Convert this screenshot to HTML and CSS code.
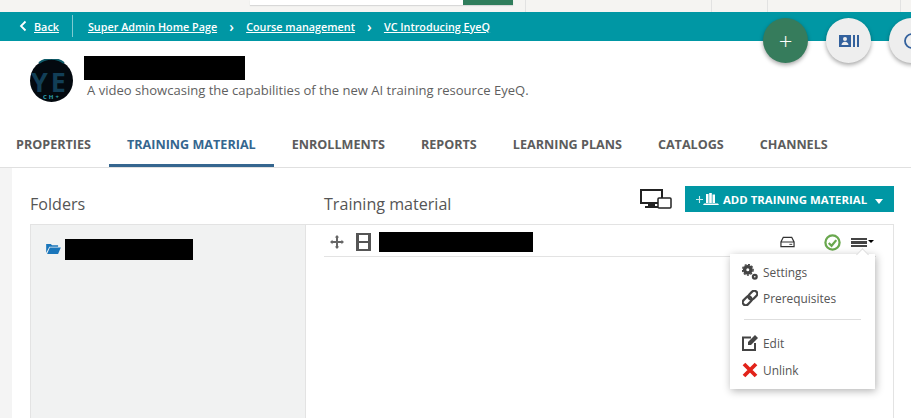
FILE: index.html
```html
<!DOCTYPE html>
<html lang="en">
<head>
    <meta charset="UTF-8">
    <title>VC Introducing EyeQ</title>
    <link rel="stylesheet" href="styles.css">
</head>
<body>
    <div class="top-strip">
        <div class="search-box"><span class="search-btn"></span></div>
        <span class="strip-cell cell-a"></span>
        <span class="strip-cell cell-b"></span>
        <span class="strip-cell cell-c"></span>
        <span class="strip-cell cell-d"></span>
    </div>

    <div class="breadcrumb">
        <svg class="back-arrow" viewBox="0 0 8 12" width="8" height="12">
            <path d="M6.500 1.500 2 6l4.500 4.500" fill="none" stroke="#fff" stroke-width="1.800"/>
        </svg>
        <a class="crumb back-link">Back</a>
        <span class="crumb-divider"></span>
        <a class="crumb">Super Admin Home Page</a>
        <span class="crumb-sep">&#8250;</span>
        <a class="crumb">Course management</a>
        <span class="crumb-sep">&#8250;</span>
        <a class="crumb">VC Introducing EyeQ</a>
    </div>

    <!-- Floating round buttons -->
    <div class="fab-row">
        <div class="fab fab-green">+</div>
        <div class="fab">
            <svg viewBox="0 0 20 12" width="20" height="12">
                <path fill="#33619d" fill-rule="evenodd" d="M0 0h12v12H0zM6 2a2 2 0 1 0 0 4 2 2 0 0 0 0-4zM2.500 10h7c0-2-1.500-3.300-3.500-3.300S2.500 8 2.500 10z"/>
                <path fill="#33619d" d="M14 0h2v12h-2zM18 0h2v12h-2z"/>
            </svg>
        </div>
        <div class="fab">
            <svg viewBox="0 0 16 16" width="16" height="16">
                <circle cx="8" cy="8" r="7" fill="none" stroke="#33619d" stroke-width="1.800"/>
                <path d="M8 7v5M8 3.500v2" stroke="#33619d" stroke-width="2"/>
            </svg>
        </div>
    </div>

    <div class="course-head">
        <svg class="course-logo" viewBox="0 0 43 43" width="43" height="43">
            <circle cx="21.500" cy="21.500" r="21.500" fill="#03090f"/>
            <path d="M9 4a21 21 0 0 1 25 0" fill="none" stroke="#0e5a68" stroke-width="2"/>
            <text class="logo-text"><tspan class="logo-big" x="1" y="33">YE</tspan><tspan class="logo-small" x="13" y="40">CH+</tspan></text>
        </svg>
        <div class="course-info">
            <div class="redact course-title"></div>
            <p class="course-desc">A video showcasing the capabilities of the new AI training resource EyeQ.</p>
        </div>
    </div>

    <nav class="tabs">
        <a class="tab">PROPERTIES</a>
        <a class="tab tab-active">TRAINING MATERIAL</a>
        <a class="tab">ENROLLMENTS</a>
        <a class="tab">REPORTS</a>
        <a class="tab">LEARNING PLANS</a>
        <a class="tab">CATALOGS</a>
        <a class="tab">CHANNELS</a>
    </nav>

    <main class="content">
        <div class="panel">
            <div class="panel-head">
                <h2 class="folders-title">Folders</h2>
                <h2 class="material-title">Training material</h2>
                <svg class="devices-icon" viewBox="0 0 32 20" width="32" height="20">
                    <path d="M1 1h21v13H1z" fill="none" stroke="#222" stroke-width="2"/>
                    <path d="M8 15h7v2h3v2H5v-2h3z" fill="#222"/>
                    <rect x="18" y="9" width="13" height="10" rx="1" fill="#fff" stroke="#222" stroke-width="1.500"/>
                </svg>
                <button class="add-btn">
                    <svg viewBox="0 0 24 12" width="24" height="12">
                        <path d="M0 6.500h7M3.500 3v7" stroke="#cfeeee" stroke-width="1.100"/>
                        <path d="M10 1h2.500v9H10zM13.200 0h2.600v10h-2.600zM16.500 1.500h2.500V10h-2.500z" fill="#fff"/>
                        <path d="M8 10.500h14l1 1.500H7z" fill="#fff"/>
                    </svg>
                    ADD TRAINING MATERIAL
                    <span class="add-caret"></span>
                </button>
            </div>

            <div class="columns">
                <aside class="folders">
                    <svg viewBox="0 0 16 12" width="15" height="11">
                        <path d="M0 11V1h5l1.500 1.500H13V4H3.500L0 11zM1 12l3-7h12l-3 7z" fill="#1a76bb"/>
                    </svg>
                    <div class="redact folder-name"></div>
                </aside>

                <section class="material">
                    <div class="material-row">
                        <svg viewBox="0 0 14 14" width="14" height="14">
                            <path d="M7 0l2.200 2.500H8V6h3.500V4.800L14 7l-2.500 2.200V8H8v3.500h1.200L7 14l-2.200-2.500H6V8H2.500v1.200L0 7l2.500-2.200V6H6V2.500H4.800z" fill="#666"/>
                        </svg>
                        <svg viewBox="0 0 15 18" width="15" height="18">
                            <path fill="#555" fill-rule="evenodd" d="M0 0h15v18H0zM3 2v6h9V2zM3 10v6h9v-6z"/>
                        </svg>
                        <div class="redact material-name"></div>
                        <svg class="drive-icon" viewBox="0 0 16 12" width="15" height="12">
                            <path d="M3.500 1h9L15 6v5H1V6zM1 6h14" fill="none" stroke="#333" stroke-width="1.300"/>
                            <path d="M10 8.500h3" stroke="#333"/>
                        </svg>
                        <svg class="check-icon" viewBox="0 0 18 18" width="17" height="17">
                            <circle cx="9" cy="9" r="7.500" fill="none" stroke="#6aa84f" stroke-width="2.400"/>
                            <path d="M5 9.500l3 3 5-6" fill="none" stroke="#6aa84f" stroke-width="2.400"/>
                        </svg>
                        <div class="menu-toggle">
                            <span class="bars"></span>
                            <span class="toggle-caret"></span>
                        </div>
                    </div>

                    <div class="dropdown">
                        <a class="menu-item">
                            <svg viewBox="0 0 16 16" width="16" height="16">
                                <circle cx="5.800" cy="5.800" r="3.200" fill="none" stroke="#444" stroke-width="3.400"/>
                                <circle cx="5.800" cy="5.800" r="5.300" fill="none" stroke="#444" stroke-width="1.400" stroke-dasharray="2 1.500"/>
                                <circle cx="12.800" cy="12.800" r="1.900" fill="none" stroke="#444" stroke-width="2.200"/>
                            </svg>
                            Settings
                        </a>
                        <a class="menu-item">
                            <svg viewBox="0 0 16 16" width="16" height="16">
                                <g transform="rotate(-45 8 8)" fill="none" stroke="#444" stroke-width="2.200">
                                    <rect x="-1" y="5" width="10" height="6" rx="3"/>
                                    <rect x="7" y="5" width="10" height="6" rx="3"/>
                                </g>
                            </svg>
                            Prerequisites
                        </a>
                        <hr class="menu-line">
                        <a class="menu-item">
                            <svg viewBox="0 0 16 16" width="16" height="16">
                                <path d="M9 2.500H1V15h12V8" fill="none" stroke="#444" stroke-width="2"/>
                                <path d="M13 0l3 3-7 7H6V7z" fill="#444"/>
                            </svg>
                            Edit
                        </a>
                        <a class="menu-item menu-item-last">
                            <svg viewBox="0 0 16 16" width="16" height="16">
                                <path d="M2 2l12 12M14 2L2 14" stroke="#e2231a" stroke-width="3.800"/>
                            </svg>
                            Unlink
                        </a>
                    </div>
                </section>
            </div>
        </div>
    </main>
</body>
</html>
```
FILE: styles.css
```css
* {
    box-sizing: border-box;
}

body {
    margin: 0;
    height: 418px;
    overflow: hidden;
    position: relative;
    background: #fff;
    color: #555;
    font-family: "Open Sans", sans-serif;
    font-size: 13px;
}

.redact {
    background: #000;
}

/* Top strip */
.top-strip {
    height: 12px;
    background: #f5f4f2;
    display: flex;
    padding-left: 250px;
}

.search-box {
    width: 263px;
    height: 5px;
    background: #fff;
    box-shadow: 0 1px 1px #d8d8d8;
    display: flex;
    justify-content: flex-end;
}

.search-btn {
    width: 50px;
    height: 5px;
    background: #2f7d5b;
}

.strip-cell {
    border-left: 1px solid #e2e2e2;
}

.cell-a {
    width: 186px;
    margin-left: 12px;
}

.cell-b {
    width: 56px;
}

.cell-c {
    width: 133px;
}

.cell-d {
    width: 11px;
}

/* Breadcrumb */
.breadcrumb {
    height: 29px;
    padding: 0 0 1px 19px;
    background: #0097a4;
    display: flex;
    align-items: center;
    color: #fff;
    font-size: 10.800px;
    font-weight: 600;
}

.back-arrow {
    margin-right: 7px;
}

.crumb {
    color: #fff;
    text-decoration: underline;
}

.crumb-divider {
    width: 1px;
    height: 22px;
    background: #7fcbd1;
    margin: 0 15px 0 13px;
}

.crumb-sep {
    width: 29px;
    text-align: center;
    font-size: 14px;
}

/* Floating buttons */
.fab-row {
    position: absolute;
    top: 18px;
    left: 763px;
    display: flex;
    gap: 18px;
}

.fab {
    width: 45px;
    height: 45px;
    flex: none;
    border-radius: 50%;
    background: #eeeeee;
    box-shadow: 0 2px 4px rgba(0, 0, 0, 0.35);
    display: flex;
    align-items: center;
    justify-content: center;
}

.fab-green {
    background: #367c5c;
    color: #fff;
    font-size: 24px;
    font-weight: 300;
}

/* Course heading */
.course-head {
    height: 85px;
    display: flex;
    padding: 15px 0 0 30px;
    gap: 11px;
}

.course-logo {
    margin-top: 3px;
    flex: none;
}

.logo-big {
    font-size: 27px;
    font-weight: 700;
    letter-spacing: 3px;
    fill: #123f57;
}

.logo-small {
    font-size: 6px;
    font-weight: 700;
    letter-spacing: 2px;
    fill: #2fa5b5;
}

.course-title {
    width: 161px;
    height: 24px;
}

.course-desc {
    margin: 1px 0 0 3px;
    font-size: 13.060px;
    line-height: 18px;
    color: #5f5f5f;
}

/* Tabs */
.tabs {
    height: 42px;
    display: flex;
    padding-left: 16px;
    border-bottom: 1px solid #e0e0e0;
}

.tab {
    padding: 0 18px;
    line-height: 37px;
    font-size: 12.600px;
    font-weight: 700;
    color: #5c5c5c;
}

.tab:first-child {
    padding-left: 0;
}

.tab-active {
    color: #35668f;
    border-bottom: 3px solid #35668f;
    height: 41px;
}

/* Content */
.content {
    height: 250px;
    padding-left: 12px;
    background: #f4f4f4;
}

.panel {
    height: 100%;
    background: #fff;
    padding: 18px 17px 0 18px;
}

.panel-head {
    height: 38px;
    display: flex;
    align-items: flex-start;
}

.panel-head h2 {
    margin: 7px 0 0;
    font-size: 16.100px;
    line-height: 22px;
    font-weight: 400;
    color: #555;
}

.folders-title {
    width: 294px;
}

.material-title {
    flex: 1;
}

.devices-icon {
    margin: 3px 13px 0 0;
}

.add-btn {
    width: 209px;
    height: 26px;
    border: 0;
    background: #0097a4;
    color: #fff;
    font-family: inherit;
    font-size: 11.400px;
    font-weight: 700;
    display: flex;
    align-items: center;
    gap: 3px;
    padding: 0 0 0 11px;
}

.add-caret {
    width: 0;
    height: 0;
    margin-left: 5px;
    margin-top: 4px;
    border-left: 4px solid transparent;
    border-right: 4px solid transparent;
    border-top: 5px solid #fff;
}

.columns {
    height: 200px;
    display: flex;
    border: 1px solid #e3e3e3;
    border-bottom: 0;
}

.folders {
    width: 275px;
    background: #f1f2f2;
    border-right: 1px solid #e3e3e3;
    padding: 14px 0 0 15px;
    display: flex;
    align-items: flex-start;
    gap: 4px;
}

.folders svg {
    margin-top: 4px;
}

.folder-name {
    width: 128px;
    height: 21px;
}

.material {
    flex: 1;
    padding: 0 17px 0 18px;
    position: relative;
}

.material-row {
    height: 32px;
    padding: 3px 0 0 6px;
    border-bottom: 1px solid #e3e3e3;
    display: flex;
    align-items: center;
}

.material-row svg:nth-child(2) {
    margin-left: 12px;
}

.material-name {
    width: 154px;
    height: 20px;
    margin-left: 8px;
}

.drive-icon {
    margin-left: auto;
}

.check-icon {
    margin-left: 29px;
}

.menu-toggle {
    display: flex;
    align-items: flex-start;
    height: 12px;
    width: 23px;
    margin: 4px 2px 0 10px;
}

.bars {
    width: 16px;
    height: 10px;
    background: repeating-linear-gradient(#444 0 2.500px, #fff 2.500px 3.500px);
}

.toggle-caret {
    width: 0;
    height: 0;
    margin: 2px 0 0 1px;
    border-left: 3px solid transparent;
    border-right: 3px solid transparent;
    border-top: 3px solid #000;
}

/* Dropdown menu */
.dropdown {
    position: absolute;
    top: 29px;
    left: 424px;
    width: 145px;
    height: 135px;
    padding: 5px 12px 0;
    background: #fff;
    box-shadow: 1px 2px 8px rgba(0, 0, 0, 0.3);
}

.dropdown::before {
    content: "";
    position: absolute;
    top: -4px;
    left: 128px;
    width: 8px;
    height: 8px;
    background: #fff;
    transform: rotate(45deg);
    border-left: 1px solid #ddd;
    border-top: 1px solid #ddd;
}

.menu-item {
    height: 26px;
    display: flex;
    align-items: center;
    gap: 5px;
    font-size: 11.900px;
    color: #555;
}

.menu-item-last {
    margin-top: 1px;
}

.menu-line {
    margin: 8px 2px 10px 2px;
    border: 0;
    border-top: 1px solid #dedede;
}
```
